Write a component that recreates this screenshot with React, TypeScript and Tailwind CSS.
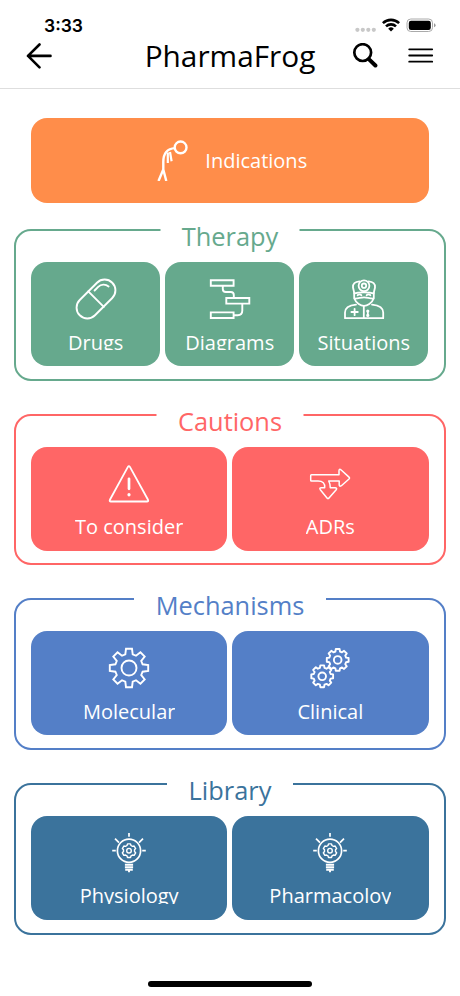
import type { ReactNode } from "react";

function gearPath(cx: number, cy: number, teeth: number, outer: number, body: number, tip: number, base: number) {
  const points: string[] = [];
  for (let i = 0; i < teeth; i++) {
    const a = -Math.PI / 2 + (i * 2 * Math.PI) / teeth;
    const corners = [
      [body, -base],
      [outer, -tip],
      [outer, tip],
      [body, base],
    ];
    for (const [r, w] of corners) {
      const x = cx + r * Math.cos(a) - w * Math.sin(a);
      const y = cy + r * Math.sin(a) + w * Math.cos(a);
      points.push(`${x.toFixed(2)} ${y.toFixed(2)}`);
    }
  }
  return `M${points.join("L")}Z`;
}

function Icon({ children, width = 1.9 }: { children: ReactNode; width?: number }) {
  return (
    <svg
      className="block size-10 shrink-0 overflow-visible"
      viewBox="0 0 40 40"
      fill="none"
      stroke="currentColor"
      strokeWidth={width}
      strokeLinecap="round"
      strokeLinejoin="round"
    >
      {children}
    </svg>
  );
}

const PillIcon = () => (
  <Icon>
    <rect x="-3" y="9.2" width="46" height="21.6" rx="10.8" transform="rotate(-45 20 20)" />
    <path d="M12.3 12.3 27.8 27.8M18.6 11.5l3.6-3.6C25 5 29.5 4.8 32.6 7.4" />
  </Icon>
);

const DiagramIcon = () => (
  <Icon>
    <g strokeLinecap="butt" strokeLinejoin="miter">
      <path d="M.8 1.2h22.8v5.6H.8zM16.3 19h23v5.6h-23zM.8 33.4h22.8V39H.8z" />
      <path d="M12.8 6.8V10q0 3 3 3h5q3 0 3 3v3M32.3 24.6v7q0 4.6-4.6 4.6h-4" />
    </g>
  </Icon>
);

const DoctorIcon = () => (
  <Icon width={1.8}>
    <circle cx="20" cy="6.7" r="5.4" />
    <circle cx="20" cy="6.7" r="2.2" />
    <path d="M15.4 2.4C11 2.8 8.600 4.800 9 8.500l1.400 6c3.500-1.600 15.700-1.600 19.200 0l1.400-6C31.400 4.800 29 2.800 24.600 2.400" />
    <path d="M10.200 14v5.200c2 5.400 6.700 7.600 9.800 7.600s7.800-2.200 9.800-7.600V14M10.200 19.600c4.600.2 6-1.200 9.800-1.200s5.200 1.400 9.800 1.200M13.600 16.200c.8-1.100 3-1.100 3.800 0M22.600 16.200c.8-1.100 3-1.100 3.800 0" />
    <path d="M12 25.700C5 26.500 1 28.300 1 33.500V39.200h38.200v-5.700c0-5.200-4-7-11.200-7.800M19.800 27v12M10.600 29.800v6.400M7.400 33h6.400" />
    <path d="M23.800 32v.1M23.800 36.300v.1" strokeWidth="3.200" />
    <path d="M23.800 32v4" />
  </Icon>
);

const WarningIcon = () => (
  <Icon width={1.8}>
    <path d="M18.900 2.900q1-1.700 2 0L39 35.800q.8 1.700-1 1.700H1.900q-1.800 0-1-1.700z" />
    <path d="M20 14.800v10" strokeWidth="2.700" />
    <path d="M20 30.700v.1" strokeWidth="3.200" />
  </Icon>
);

const BranchIcon = () => (
  <Icon width={1.5}>
    <path d="M1.500 10.800H29V7q0-2.800 2.200-1L39 13.100q1 .9 0 1.900l-7.600 6.700q-2.200 1.300-2.200-1V17H18.700q1.600 2.800 1.600 6.700h4.700q2.500.2 1.200 2L19 33.900q-1 1.200-2 0l-6.700-8.200q-1.300-2 1.200-2h3.200q.6-6.700-6.700-6.700H1.500q-.8 0-.8-.8v-4.600q0-.8.8-.8z" />
  </Icon>
);

const GearIcon = () => (
  <Icon>
    <path strokeLinejoin="miter" d={gearPath(20, 20, 8, 19.2, 13.6, 3, 3.7)} />
    <circle cx="20" cy="20" r="7.500" />
  </Icon>
);

const GearsIcon = () => (
  <Icon width={1.9}>
    <path d={gearPath(27.7, 11.9, 8, 10.9, 8.4, 1.9, 2.3)} />
    <circle cx="27.700" cy="11.900" r="3.800" />
    <path d={gearPath(12.2, 28.3, 8, 10.9, 8.4, 1.9, 2.3)} />
    <circle cx="12.200" cy="28.300" r="3.800" />
  </Icon>
);

const BulbIcon = () => (
  <Icon width={1.7}>
    <circle cx="20" cy="17.700" r="11.600" />
    <path strokeWidth="1.400" d={gearPath(20, 17.7, 6, 6.8, 5.2, 1.5, 2)} />
    <circle cx="20" cy="17.700" r="2.300" strokeWidth="1.400" />
    <path strokeLinecap="butt" d="M20 0v3.700M3.200 17.700h3.600M33.200 17.700h3.600M6 5.600l4 4M34 5.600l-4 4" />
    <path strokeLinecap="butt" strokeWidth="1.900" d="M15.900 31.700h8.200M15.900 34.300h8.200M16.200 36.700h7.600M20 37v2.300" />
  </Icon>
);

const StoopedIcon = () => (
  <svg className="block h-[41px] w-[31px]" viewBox="0 0 31 41" fill="none" stroke="currentColor" strokeWidth="2.400">
    <circle cx="23.600" cy="7.400" r="5.900" />
    <path d="M18 8.100C10 8.600 6.300 14 6.300 22v7.500L1.500 41M6.300 29.500 9.300 41" />
    <path d="M10.800 12.500V23M13 12l1.600 9.200" strokeWidth="2.200" />
  </svg>
);

function Tile({ label, color, icon }: { label: string; color: string; icon: ReactNode }) {
  return (
    <button className={`flex h-[104px] flex-1 basis-0 flex-col items-center rounded-[16px] pt-[17px] text-white ${color}`}>
      {icon}
      <span className="mt-[9.500px] h-[21.300px] overflow-hidden text-[20px] leading-[28px] whitespace-nowrap">{label}</span>
    </button>
  );
}

function Group({ title, tone, notch, children }: { title: string; tone: string; notch: string; children: ReactNode }) {
  return (
    <section className={`relative mx-[14px] mb-[33px] h-[151.600px] shrink-0 rounded-[17px] border-2 pr-[15.500px] pl-[15px] pt-[31px] ${tone}`}>
      <h2 className={`absolute -top-[15px] left-1/2 flex h-[40px] -translate-x-1/2 items-center justify-center bg-white text-[25.400px] leading-[40px] ${notch}`}>
        {title}
      </h2>
      <div className="flex gap-[4.800px]">{children}</div>
    </section>
  );
}

export default function App() {
  const green = "bg-[#66a98d]";
  const red = "bg-[#ff6666]";
  const blue = "bg-[#547fc7]";
  const navy = "bg-[#3b739c]";
  return (
    <div className="flex h-[996px] w-[460px] flex-col overflow-hidden bg-white font-['Open_Sans',sans-serif]">
      <header className="flex h-[89px] shrink-0 flex-col border-b border-[#dedede] text-black">
        <div className="flex h-[38px] items-end justify-between pr-[24px] pl-[44px]">
          <span className="font-['Inter',sans-serif] text-[17.500px] leading-[25px] font-semibold">3:33</span>
          <div className="flex h-[20px] items-start">
            <svg className="block h-[14px] w-[82px]" viewBox="0 0 82 14">
              <g fill="#c8c8c8">
                <circle cx="3.400" cy="11.800" r="2.100" />
                <circle cx="8.800" cy="11.800" r="2.100" />
                <circle cx="14.300" cy="11.800" r="2.100" />
                <circle cx="19.800" cy="11.800" r="2.100" />
              </g>
              <g fill="none" stroke="black" strokeWidth="2.600">
                <path d="M28.900 5.100a11.800 11.800 0 0 1 16.200 0M32 8.400a7.200 7.200 0 0 1 10 0" />
              </g>
              <path d="M34.200 10.700a4 4 0 0 1 5.600 0L37 13.500z" />
              <rect x="53" y="1" width="25.500" height="12.500" rx="3.800" fill="none" stroke="#aaa" />
              <rect x="54.800" y="2.700" width="22" height="9.200" rx="2.200" />
              <path d="M80 5.200v4q1.600-.6 1.600-2t-1.600-2z" fill="#999" />
            </svg>
          </div>
        </div>
        <div className="flex h-[35px] items-center pl-[26px]">
          <svg className="block h-[26px] w-[26px]" viewBox="0 0 26 26" fill="none" stroke="black" strokeWidth="2.600" strokeLinecap="round" strokeLinejoin="round">
            <path d="M13.500 1.500 2 12.900l11.500 11.400M2 12.900h22.500" />
          </svg>
          <h1 className="ml-[92px] w-[172px] text-center text-[29.800px] leading-[35px] whitespace-nowrap">PharmaFrog</h1>
          <svg className="ml-[36px] block h-[26px] w-[26px]" viewBox="0 0 26 26" fill="none" stroke="black">
            <circle cx="10.700" cy="9.600" r="8.400" strokeWidth="2.700" />
            <path d="m16.800 16.100 6.600 6.400" strokeWidth="4" strokeLinecap="round" />
          </svg>
          <svg className="ml-[30px] block h-[26px] w-[26px]" viewBox="0 0 26 26" stroke="black" strokeWidth="1.800" strokeLinecap="round">
            <path d="M1.200 6.300h23M1.200 12.500h23M1.200 18.700h23" />
          </svg>
        </div>
      </header>
      <main className="flex flex-1 flex-col pt-[28.500px]">
        <button className="mx-[31px] mb-[26.200px] flex h-[85.500px] shrink-0 items-center justify-center rounded-[16px] bg-[#ff8d4a] pl-[4.500px] text-white">
          <StoopedIcon />
          <span className="mt-[2px] ml-[17px] text-[20px] leading-[28px]">Indications</span>
        </button>
        <Group title="Therapy" tone="border-[#66a98d] text-[#66a98d]" notch="w-[139px]">
          <Tile label="Drugs" color={green} icon={<PillIcon />} />
          <Tile label="Diagrams" color={green} icon={<DiagramIcon />} />
          <Tile label="Situations" color={green} icon={<DoctorIcon />} />
        </Group>
        <Group title="Cautions" tone="border-[#ff6666] text-[#ff6666]" notch="w-[147px]">
          <Tile label="To consider" color={red} icon={<WarningIcon />} />
          <Tile label="ADRs" color={red} icon={<BranchIcon />} />
        </Group>
        <Group title="Mechanisms" tone="border-[#547fc7] text-[#547fc7]" notch="w-[192px]">
          <Tile label="Molecular" color={blue} icon={<GearIcon />} />
          <Tile label="Clinical" color={blue} icon={<GearsIcon />} />
        </Group>
        <Group title="Library" tone="border-[#3b739c] text-[#3b739c]" notch="w-[126px]">
          <Tile label="Physiology" color={navy} icon={<BulbIcon />} />
          <Tile label="Pharmacoloy" color={navy} icon={<BulbIcon />} />
        </Group>
      </main>
      <div className="mx-auto mb-[9px] h-[6px] w-[164px] shrink-0 rounded-full bg-black" />
    </div>
  );
}
